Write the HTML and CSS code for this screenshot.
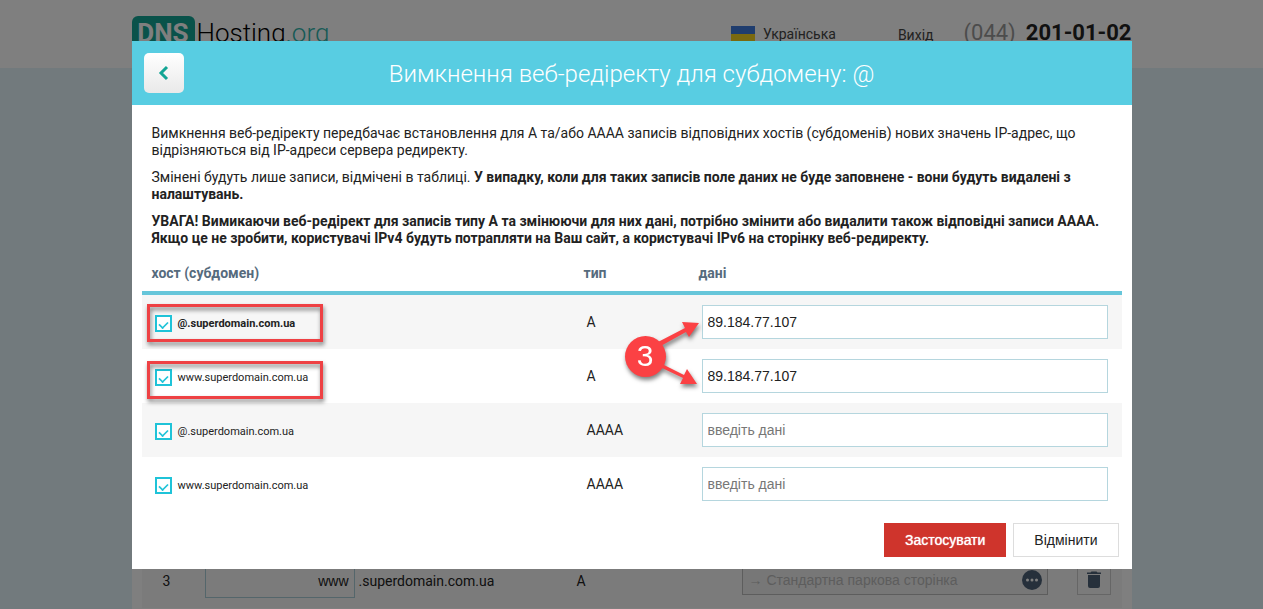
FILE: index.html
```html
<!DOCTYPE html>
<html lang="uk">
<head>
  <meta charset="utf-8">
  <meta name="viewport" content="width=device-width, initial-scale=1.0">
  <title>DNSHosting.org</title>
  <link rel="stylesheet" href="styles.css">
</head>
<body>
  <header class="header">
    <div class="container header-row">
      <a class="logo" href="#"><span class="logo-dns">DNS</span><span class="logo-name">Hosting</span><span class="logo-zone">.org</span></a>
      <a class="lang" href="#">
        <svg class="flag" viewBox="0 0 24 16"><path fill="#3e7adc" d="M0 0h24v8H0z"/><path fill="#f5d320" d="M0 8h24v8H0z"/></svg>
        Українська
      </a>
      <a class="logout" href="#">Вихід</a>
      <div class="phone"><span class="phone-code">(044)</span><b>201-01-02</b></div>
    </div>
  </header>

  <main class="container page">
    <div class="record">
      <span class="record-num">3</span>
      <input class="record-host" type="text" value="www" aria-label="хост">
      <span class="record-domain">.superdomain.com.ua</span>
      <span class="record-type">A</span>
      <div class="record-data">
        <span>→ Стандартна паркова сторінка</span>
        <svg class="dots" viewBox="0 0 20 20"><circle cx="10" cy="10" r="10" fill="#4c6076"/><g fill="#fff"><circle cx="5.5" cy="10" r="1.5"/><circle cx="10" cy="10" r="1.5"/><circle cx="14.5" cy="10" r="1.5"/></g></svg>
      </div>
      <button class="record-delete" type="button" aria-label="видалити">
        <svg width="14" height="18" viewBox="0 0 14 18"><path fill="#4c6076" d="M1 4h12v11a2 2 0 0 1-2 2H3a2 2 0 0 1-2-2zM0 1.500h3.500L4.500.500h5l1 1H14V3H0z"/></svg>
      </button>
    </div>
  </main>

  <div class="overlay">
    <form class="modal">
      <div class="modal-header">
        <button class="btn-back" type="button" aria-label="назад">
          <svg width="12" height="16" viewBox="0 0 12 16"><path d="M9 2 3 8l6 6" fill="none" stroke="#12a594" stroke-width="3"/></svg>
        </button>
        <h1 class="modal-title">Вимкнення веб-редіректу для субдомену: @</h1>
      </div>

      <div class="modal-text">
        <p>Вимкнення веб-редіректу передбачає встановлення для A та/або AAAA записів відповідних хостів (субдоменів) нових значень IP-адрес, що відрізняються від IP-адреси сервера редиректу.</p>
        <p>Змінені будуть лише записи, відмічені в таблиці. <b>У випадку, коли для таких записів поле даних не буде заповнене - вони будуть видалені з налаштувань.</b></p>
        <p><b>УВАГА! Вимикаючи веб-редірект для записів типу A та змінюючи для них дані, потрібно змінити або видалити також відповідні записи AAAA. Якщо це не зробити, користувачі IPv4 будуть потрапляти на Ваш сайт, а користувачі IPv6 на сторінку веб-редиректу.</b></p>
      </div>

      <div class="hosts-wrap">
        <table class="hosts">
          <thead>
            <tr>
              <th class="col-host">хост (субдомен)</th>
              <th class="col-type">тип</th>
              <th>дані</th>
            </tr>
          </thead>
          <tbody>
            <tr>
              <td><label class="check"><input type="checkbox" checked><b>@.superdomain.com.ua</b></label></td>
              <td>A</td>
              <td><input class="field" type="text" value="89.184.77.107" placeholder="введіть дані" aria-label="дані"></td>
            </tr>
            <tr>
              <td><label class="check"><input type="checkbox" checked>www.superdomain.com.ua</label></td>
              <td>A</td>
              <td><input class="field" type="text" value="89.184.77.107" placeholder="введіть дані" aria-label="дані"></td>
            </tr>
            <tr>
              <td><label class="check"><input type="checkbox" checked>@.superdomain.com.ua</label></td>
              <td>AAAA</td>
              <td><input class="field" type="text" placeholder="введіть дані" aria-label="дані"></td>
            </tr>
            <tr>
              <td><label class="check"><input type="checkbox" checked>www.superdomain.com.ua</label></td>
              <td>AAAA</td>
              <td><input class="field" type="text" placeholder="введіть дані" aria-label="дані"></td>
            </tr>
          </tbody>
        </table>

        <!-- step 3 marks -->
        <svg class="marks" width="570" height="160" viewBox="0 0 570 160">
          <g fill="none" stroke="#ee4144" stroke-width="3">
            <rect x="6.500" y="43.500" width="173" height="35"/>
            <rect x="6.500" y="100.500" width="173" height="35"/>
          </g>
          <g fill="#fb4144">
            <path d="M516 80l27-14-3-6 17 1-10 14-3-5-27 15z"/>
            <path d="M520 102l22 11 3-6 10 15-17 0 3-6-23-11z"/>
            <circle cx="503.500" cy="94.500" r="20.500"/>
          </g>
          <text class="marks-num" x="503" y="104" text-anchor="middle">3</text>
        </svg>
      </div>

      <div class="modal-footer">
        <button class="btn btn-apply" type="submit">Застосувати</button>
        <button class="btn btn-cancel" type="button">Відмінити</button>
      </div>
    </form>
  </div>
</body>
</html>
```

FILE: styles.css
```css
* {
  box-sizing: border-box;
}
body {
  display: flex;
  flex-direction: column;
  margin: 0;
  height: 100vh;
  overflow: hidden;
  background: #e4f5fb;
  color: #222;
  font: 14px/17px Roboto, sans-serif;
}
a {
  color: inherit;
  text-decoration: none;
}
input,
button {
  font: 14px/17px "Liberation Sans", Arial, sans-serif;
  color: inherit;
}
.container {
  width: 100%;
  max-width: 1000px;
  margin: 0 auto;
}

/* header */
.header {
  height: 68px;
  background: #fff;
}
.header-row {
  display: flex;
  align-items: flex-start;
  padding-top: 16px;
}
.logo {
  display: flex;
  margin-right: auto;
  font-size: 26px;
  line-height: 34px;
}
.logo-dns {
  width: 63px;
  margin-right: 2px;
  border-radius: 6px;
  background: #12a594;
  color: #fff;
  font-weight: bold;
  text-align: center;
}
.logo-name {
  color: #000;
  font-weight: 300;
}
.logo-zone {
  color: #2fb4ac;
  font-weight: 300;
}
.lang {
  display: flex;
  gap: 8px;
  margin: 10px 62px 0 0;
  color: #444;
}
.flag {
  width: 24px;
  height: 16px;
}
.logout {
  margin: 11px 30px 0 0;
  color: #444;
}
.phone {
  display: flex;
  gap: 10px;
  font-size: 22px;
  line-height: 34px;
}
.phone-code {
  color: #999;
}

/* dns records */
.page {
  flex: 1;
  padding: 486px 10px 0;
  background: #fff;
}
.record {
  display: flex;
  align-items: center;
  height: 54px;
  background: #f6f6f6;
}
.record-num {
  width: 63px;
  padding-left: 21px;
}
.record-host {
  width: 150px;
  height: 34px;
  padding: 0 5px;
  border: 1px solid #a9cdd6;
  background: #f6f6f6;
  text-align: right;
}
.record-domain {
  width: 222px;
  padding-left: 4px;
}
.record-type {
  flex: 1;
}
.record-data {
  display: flex;
  align-items: center;
  justify-content: space-between;
  width: 306px;
  height: 34px;
  margin: 0 29px 6px 0;
  padding: 4px 5px 0 6px;
  border: 1px solid #bbb;
  background: #eee;
  color: #bbb;
  font-family: "Liberation Sans", Arial, sans-serif;
}
.dots {
  width: 20px;
  height: 20px;
}
.record-delete {
  width: 34px;
  height: 34px;
  margin: 0 11px 6px 0;
  padding: 8px 0 0;
  border: 1px solid #ccc;
  background: #f6f6f6;
}

/* modal */
.overlay {
  position: fixed;
  inset: 0;
  padding-top: 41px;
  background: rgba(0, 0, 0, 0.5);
}
.modal {
  max-width: 1000px;
  margin: 0 auto;
  background: #fff;
}
.modal-header {
  display: flex;
  align-items: center;
  height: 64px;
  padding: 0 12px;
  background: #58cde2;
}
.btn-back {
  display: flex;
  align-items: center;
  justify-content: center;
  width: 40px;
  height: 40px;
  padding: 0;
  border: 0;
  border-radius: 5px;
  background: linear-gradient(#fff, #e9e9e9);
}
.modal-title {
  flex: 1;
  margin: 0 40px 0 0;
  padding-top: 2px;
  color: #fff;
  font-size: 24px;
  line-height: 32px;
  font-weight: 300;
  text-align: center;
}
.modal-text {
  padding: 20px 20px 15px;
}
.modal-text p {
  margin: 0 0 10px;
}
.modal-text p:last-child {
  margin-bottom: 0;
}
.hosts-wrap {
  position: relative;
  padding: 0 10px;
}
.hosts {
  width: 100%;
  table-layout: fixed;
  border-collapse: separate;
  border-spacing: 0;
}
.hosts th {
  height: 33px;
  padding: 0 0 6px 10px;
  border-bottom: 4px solid #66c6da;
  color: #566b7d;
  text-align: left;
  vertical-align: middle;
}
.hosts td {
  height: 54px;
  padding: 0 14px 0 13px;
}
.hosts tbody tr:nth-child(odd) {
  background: #f6f6f6;
}
.col-host {
  width: 432px;
}
.col-type {
  width: 115px;
}
.check {
  display: flex;
  align-items: center;
  gap: 6px;
  padding-top: 2px;
  font-size: 11px;
}
.check input {
  display: flex;
  justify-content: center;
  width: 17px;
  height: 17px;
  margin: 0;
  border: 2px solid #1fc3d8;
  background: #fff;
  -webkit-appearance: none;
          appearance: none;
}
.check input:checked::after {
  content: "";
  width: 5px;
  height: 8px;
  margin-top: 2px;
  border: solid #1fc3d8;
  border-width: 0 2px 2px 0;
  transform: rotate(45deg) scale(0.85);
}
.field {
  display: block;
  width: 100%;
  height: 34px;
  padding: 0 5px;
  border: 1px solid #b5d6de;
  background: #fff;
}
.field::placeholder {
  color: #777;
}
.marks {
  position: absolute;
  left: 10px;
  top: 0;
  pointer-events: none;
  filter: drop-shadow(1px 3px 2px rgba(0, 0, 0, 0.5));
}
.marks-num {
  fill: #fff;
  font: 30px "Liberation Sans", Arial, sans-serif;
}
.modal-footer {
  display: flex;
  justify-content: flex-end;
  gap: 7px;
  padding: 12px 13px;
}
.btn {
  height: 34px;
  padding: 0 20px;
  border: 1px solid #ddd;
  background: #fff;
  cursor: pointer;
}
.btn-apply {
  border-color: #cf342c;
  background: #cf342c;
  color: #fff;
  text-shadow: 0 0 1px #fff;
}
```
